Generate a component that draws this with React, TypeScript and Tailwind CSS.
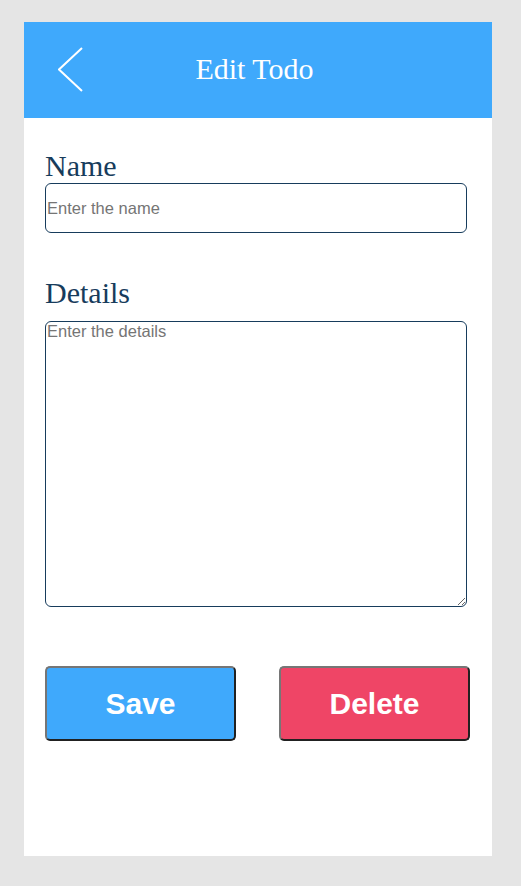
import { FC } from "react";

const BackIcon: FC = () => (
  <svg width="26" height="46" viewBox="0 0 26 46" fill="none">
    <path d="M24 1 L1 22.5 L24 44" stroke="white" strokeWidth="2" />
  </svg>
);

const App: FC = () => {
  return (
    <div className="min-h-screen bg-[#e5e5e5] pt-[22px] pl-[24px]">
      <div className="w-[468px] h-[834px] bg-white flex flex-col">
        {/* Header */}
        <div className="h-[96px] bg-[#3fa9fc] flex items-center pl-[34px] pr-[35px]">
          <button className="w-[26px] flex items-center">
            <BackIcon />
          </button>
          <h1 className="flex-1 text-center text-white text-[30px] leading-[34px] -mt-[2px] font-['Liberation_Serif',serif]">
            Edit Todo
          </h1>
          <div className="w-[32px]" />
        </div>

        {/* Form */}
        <div className="flex flex-col pl-[21px] pr-[25px] pt-[31px]">
          <label className="text-[30px] leading-[33px] text-[#173c5c] font-['Liberation_Serif',serif]">
            Name
          </label>
          <input
            className="mt-px h-[50px] w-full border border-[#173c5c] rounded-[6px] px-[1px] text-[16.5px] font-['Liberation_Sans',Arial,sans-serif] placeholder:text-[#757575] outline-none"
            placeholder="Enter the name"
          />

          <label className="mt-[43px] text-[30px] leading-[33px] text-[#173c5c] font-['Liberation_Serif',serif]">
            Details
          </label>
          <textarea
            className="mt-[12px] h-[286px] w-full border border-[#173c5c] rounded-[6px] px-[1px] py-0 text-[16.5px] leading-[1.2] font-['Liberation_Sans',Arial,sans-serif] placeholder:text-[#757575] outline-none"
            placeholder="Enter the details"
          />

          {/* Actions */}
          <div className="mt-[59px] flex justify-between w-[425px]">
            <button className="w-[191px] h-[75px] bg-[#3fa9fc] text-white font-bold text-[30px] font-['Liberation_Sans',Arial,sans-serif] rounded-[5px] border-2 border-[#767676] [border-style:outset]">
              Save
            </button>
            <button className="w-[191px] h-[75px] bg-[#ef4566] text-white font-bold text-[30px] font-['Liberation_Sans',Arial,sans-serif] rounded-[5px] border-2 border-[#767676] [border-style:outset]">
              Delete
            </button>
          </div>
        </div>
      </div>
    </div>
  );
};

export default App;
